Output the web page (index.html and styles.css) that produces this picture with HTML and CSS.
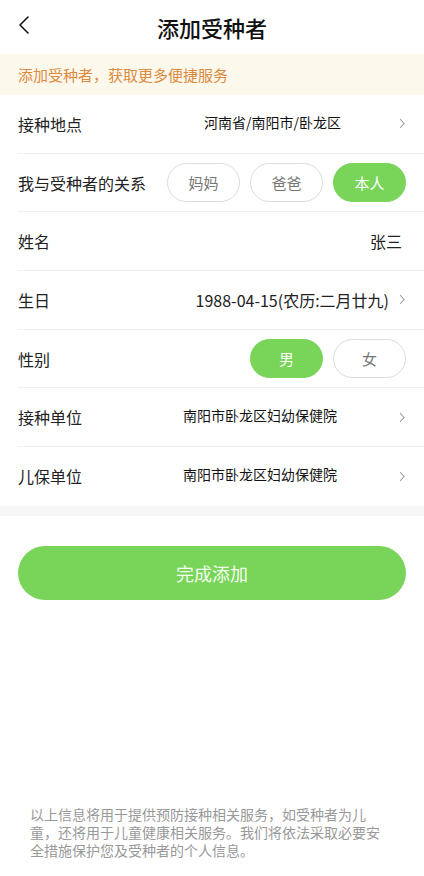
FILE: index.html
```html
<!DOCTYPE html>
<html lang="zh-CN">
<head>
<meta charset="utf-8">
<meta name="viewport" content="width=device-width, initial-scale=1">
<title>添加受种者</title>
<link rel="stylesheet" href="styles.css">
</head>
<body>
<div class="page">
  <header class="topbar">
    <span class="back">
      <svg width="14" height="20" viewBox="0 0 14 20"><path d="M11 2 L3 10 L11 18" fill="none" stroke="#111" stroke-width="1.6" stroke-linecap="round" stroke-linejoin="round"/></svg>
    </span>
    <h1 class="title">添加受种者</h1>
  </header>
  <div class="notice">添加受种者，获取更多便捷服务</div>
  <section class="form">
    <div class="row">
      <span class="label">接种地点</span>
      <span class="value value-addr">河南省/南阳市/卧龙区</span>
      <span class="chev"><svg width="6" height="11" viewBox="0 0 6 11"><path d="M1 1 L5 5.5 L1 10" fill="none" stroke="#999" stroke-width="1.1"/></svg></span>
    </div>
    <div class="row">
      <span class="label">我与受种者的关系</span>
      <div class="pills">
        <span class="pill">妈妈</span>
        <span class="pill">爸爸</span>
        <span class="pill pill-on">本人</span>
      </div>
    </div>
    <div class="row">
      <span class="label">姓名</span>
      <span class="plain">张三</span>
    </div>
    <div class="row">
      <span class="label">生日</span>
      <span class="plain plain-chev">1988-04-15(农历:二月廿九)</span>
      <span class="chev"><svg width="6" height="11" viewBox="0 0 6 11"><path d="M1 1 L5 5.5 L1 10" fill="none" stroke="#999" stroke-width="1.1"/></svg></span>
    </div>
    <div class="row">
      <span class="label">性别</span>
      <div class="pills">
        <span class="pill pill-on">男</span>
        <span class="pill">女</span>
      </div>
    </div>
    <div class="row">
      <span class="label">接种单位</span>
      <span class="value">南阳市卧龙区妇幼保健院</span>
      <span class="chev"><svg width="6" height="11" viewBox="0 0 6 11"><path d="M1 1 L5 5.5 L1 10" fill="none" stroke="#999" stroke-width="1.1"/></svg></span>
    </div>
    <div class="row row-last">
      <span class="label">儿保单位</span>
      <span class="value">南阳市卧龙区妇幼保健院</span>
      <span class="chev"><svg width="6" height="11" viewBox="0 0 6 11"><path d="M1 1 L5 5.5 L1 10" fill="none" stroke="#999" stroke-width="1.1"/></svg></span>
    </div>
  </section>
  <div class="band"></div>
  <div class="actions">
    <button class="submit" type="button">完成添加</button>
  </div>
  <p class="footnote">以上信息将用于提供预防接种相关服务，如受种者为儿童，还将用于儿童健康相关服务。我们将依法采取必要安全措施保护您及受种者的个人信息。</p>
</div>
</body>
</html>
```
FILE: styles.css
```css
* { box-sizing: border-box; }
html, body { margin: 0; padding: 0; background: #fff; }
body {
  font-family: "Noto Sans CJK SC", "Noto Sans", sans-serif;
  color: #222;
}
.page {
  display: flex;
  flex-direction: column;
  min-height: 876px;
}
.topbar {
  height: 54px;
  display: flex;
  align-items: center;
  justify-content: center;
  position: relative;
}
.back {
  position: absolute;
  left: 17px;
  top: 15px;
  display: flex;
}
.title {
  margin: 0;
  font-size: 22px;
  font-weight: 500;
  color: #111;
  line-height: 1;
}
.notice {
  height: 41px;
  background: #fdf8ec;
  color: #dc8a3e;
  font-size: 15px;
  display: flex;
  align-items: center;
  padding-left: 18px;
}
.form {
  padding-left: 18px;
}
.row {
  height: 58.7px;
  display: flex;
  align-items: center;
  border-bottom: 1px solid #f1f1f1;
  padding-right: 18px;
}
.row-last { border-bottom: none; }
.label {
  font-size: 16px;
  color: #222;
  flex-shrink: 0;
}
.value {
  margin-left: auto;
  margin-right: 62px;
  font-size: 14px;
  color: #111;
  font-weight: 400;
  margin-top: -4px;
}
.value-addr { margin-right: 58px; }
.chev {
  display: flex;
  width: 6px;
  margin-right: 1px;
}
.plain {
  margin-left: auto;
  font-size: 16px;
  color: #222;
  margin-right: 4px;
}
.plain-chev { margin-right: 10px; }
.pills {
  margin-left: auto;
  display: flex;
  gap: 10px;
}
.pill {
  width: 73px;
  height: 39px;
  border: 1px solid #dcdcdc;
  border-radius: 20px;
  display: flex;
  align-items: center;
  justify-content: center;
  font-size: 15px;
  color: #777;
}
.pill-on {
  background: #79d45a;
  border-color: #79d45a;
  color: #fff;
}
.band {
  height: 10px;
  background: #f6f6f6;
}
.actions {
  padding: 30px 18px 0;
}
.submit {
  width: 100%;
  height: 54px;
  border: none;
  border-radius: 27px;
  background: #79d45a;
  color: #f4fff0;
  font-family: "Noto Sans CJK SC", "Noto Sans", sans-serif;
  font-size: 18px;
}
.footnote {
  margin: auto 0 0;
  padding: 0 0 17px 30px;
  width: 382px;
  font-size: 14px;
  line-height: 18px;
  color: #999;
}
```
